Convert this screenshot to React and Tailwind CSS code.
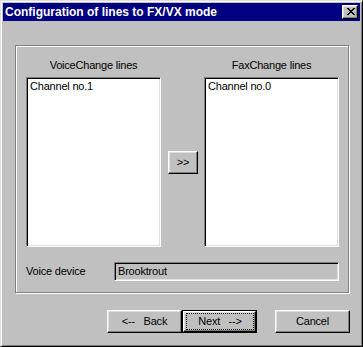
import React from 'react';

// classic Win2000 bevels
const raised =
  'bg-[#c0c0c0] border border-t-white border-l-white border-b-black border-r-black shadow-[inset_-1px_-1px_0_#808080,inset_1px_1px_0_#dfdfdf]';
const sunken =
  'border border-t-[#808080] border-l-[#808080] border-b-white border-r-white shadow-[inset_1px_1px_0_#000,inset_-1px_-1px_0_#dfdfdf]';

const CloseGlyph = () => (
  <svg width="8" height="7" viewBox="0 0 8 7" shapeRendering="crispEdges">
    <path
      fill="#000"
      d="M0 0h2v1H0z M6 0h2v1H6z M1 1h2v1H1z M5 1h2v1H5z M2 2h4v1H2z M3 3h2v1H3z M2 4h4v1H2z M1 5h2v1H1z M5 5h2v1H5z M0 6h2v1H0z M6 6h2v1H6z"
    />
  </svg>
);

const ListBox = ({ items }) => (
  <div className={`w-[135px] h-[170px] bg-white ${sunken} pl-[3px] pt-[2px]`}>
    {items.map((it) => (
      <div key={it} className="leading-[13px]">{it}</div>
    ))}
  </div>
);

export default function App() {
  return (
    <div className="w-[363px] h-[347px] bg-[#c0c0c0] border border-t-[#dfdfdf] border-l-[#dfdfdf] border-b-black border-r-black shadow-[inset_1px_1px_0_#fff,inset_-1px_-1px_0_#808080] p-[2px] flex flex-col font-['Liberation_Sans',Arial,sans-serif] text-[11px] leading-[13px] tracking-[-0.2px] text-black select-none">
      {/* title bar */}
      <div className="h-[18px] bg-[#000080] flex items-center pl-[2px] pr-[2px]">
        <span className="flex-1 text-white font-bold text-[12px] tracking-[0px]">Configuration of lines to FX/VX mode</span>
        <button className={`w-[16px] h-[14px] ${raised} flex items-start pl-[4px] pt-[2px]`}>
          <CloseGlyph />
        </button>
      </div>

      {/* group box */}
      <div className="mt-[24px] ml-[12px] w-[334px] h-[248px] border border-[#808080] shadow-[inset_1px_1px_0_#fff,1px_1px_0_#fff] flex flex-col pt-[13px] pl-[10px] pr-[9px]">
        <div className="flex">
          <div className="w-[135px] text-center">VoiceChange lines</div>
          <div className="w-[43px]" />
          <div className="w-[135px] text-center">FaxChange lines</div>
        </div>
        <div className="mt-[5px] flex items-center">
          <ListBox items={['Channel no.1']} />
          <div className="w-[43px] pl-[7px]">
            <button className={`w-[30px] h-[23px] ${raised} flex items-center justify-center`}>&gt;&gt;</button>
          </div>
          <ListBox items={['Channel no.0']} />
        </div>
        <div className="mt-[15px] flex items-center">
          <div className="w-[88px]">Voice device</div>
          <div className={`w-[225px] h-[19px] bg-[#c0c0c0] ${sunken} pl-[3px] flex items-center`}>Brooktrout</div>
        </div>
      </div>

      {/* buttons */}
      <div className="mt-[17px] flex justify-end pr-[10px]">
        <button className={`w-[75px] h-[23px] ${raised} flex items-center justify-center whitespace-pre`}>{'<--   Back'}</button>
        <button className="w-[75px] h-[23px] border border-black flex">
          <div className={`flex-1 ${raised} pt-[1px] pl-[2px] pr-[1px] pb-[1px] flex`}>
            <div className="flex-1 border border-dotted border-black flex items-center justify-center whitespace-pre">{'Next   -->'}</div>
          </div>
        </button>
        <button className={`ml-[18px] w-[75px] h-[23px] ${raised} flex items-center justify-center`}>Cancel</button>
      </div>
    </div>
  );
}
